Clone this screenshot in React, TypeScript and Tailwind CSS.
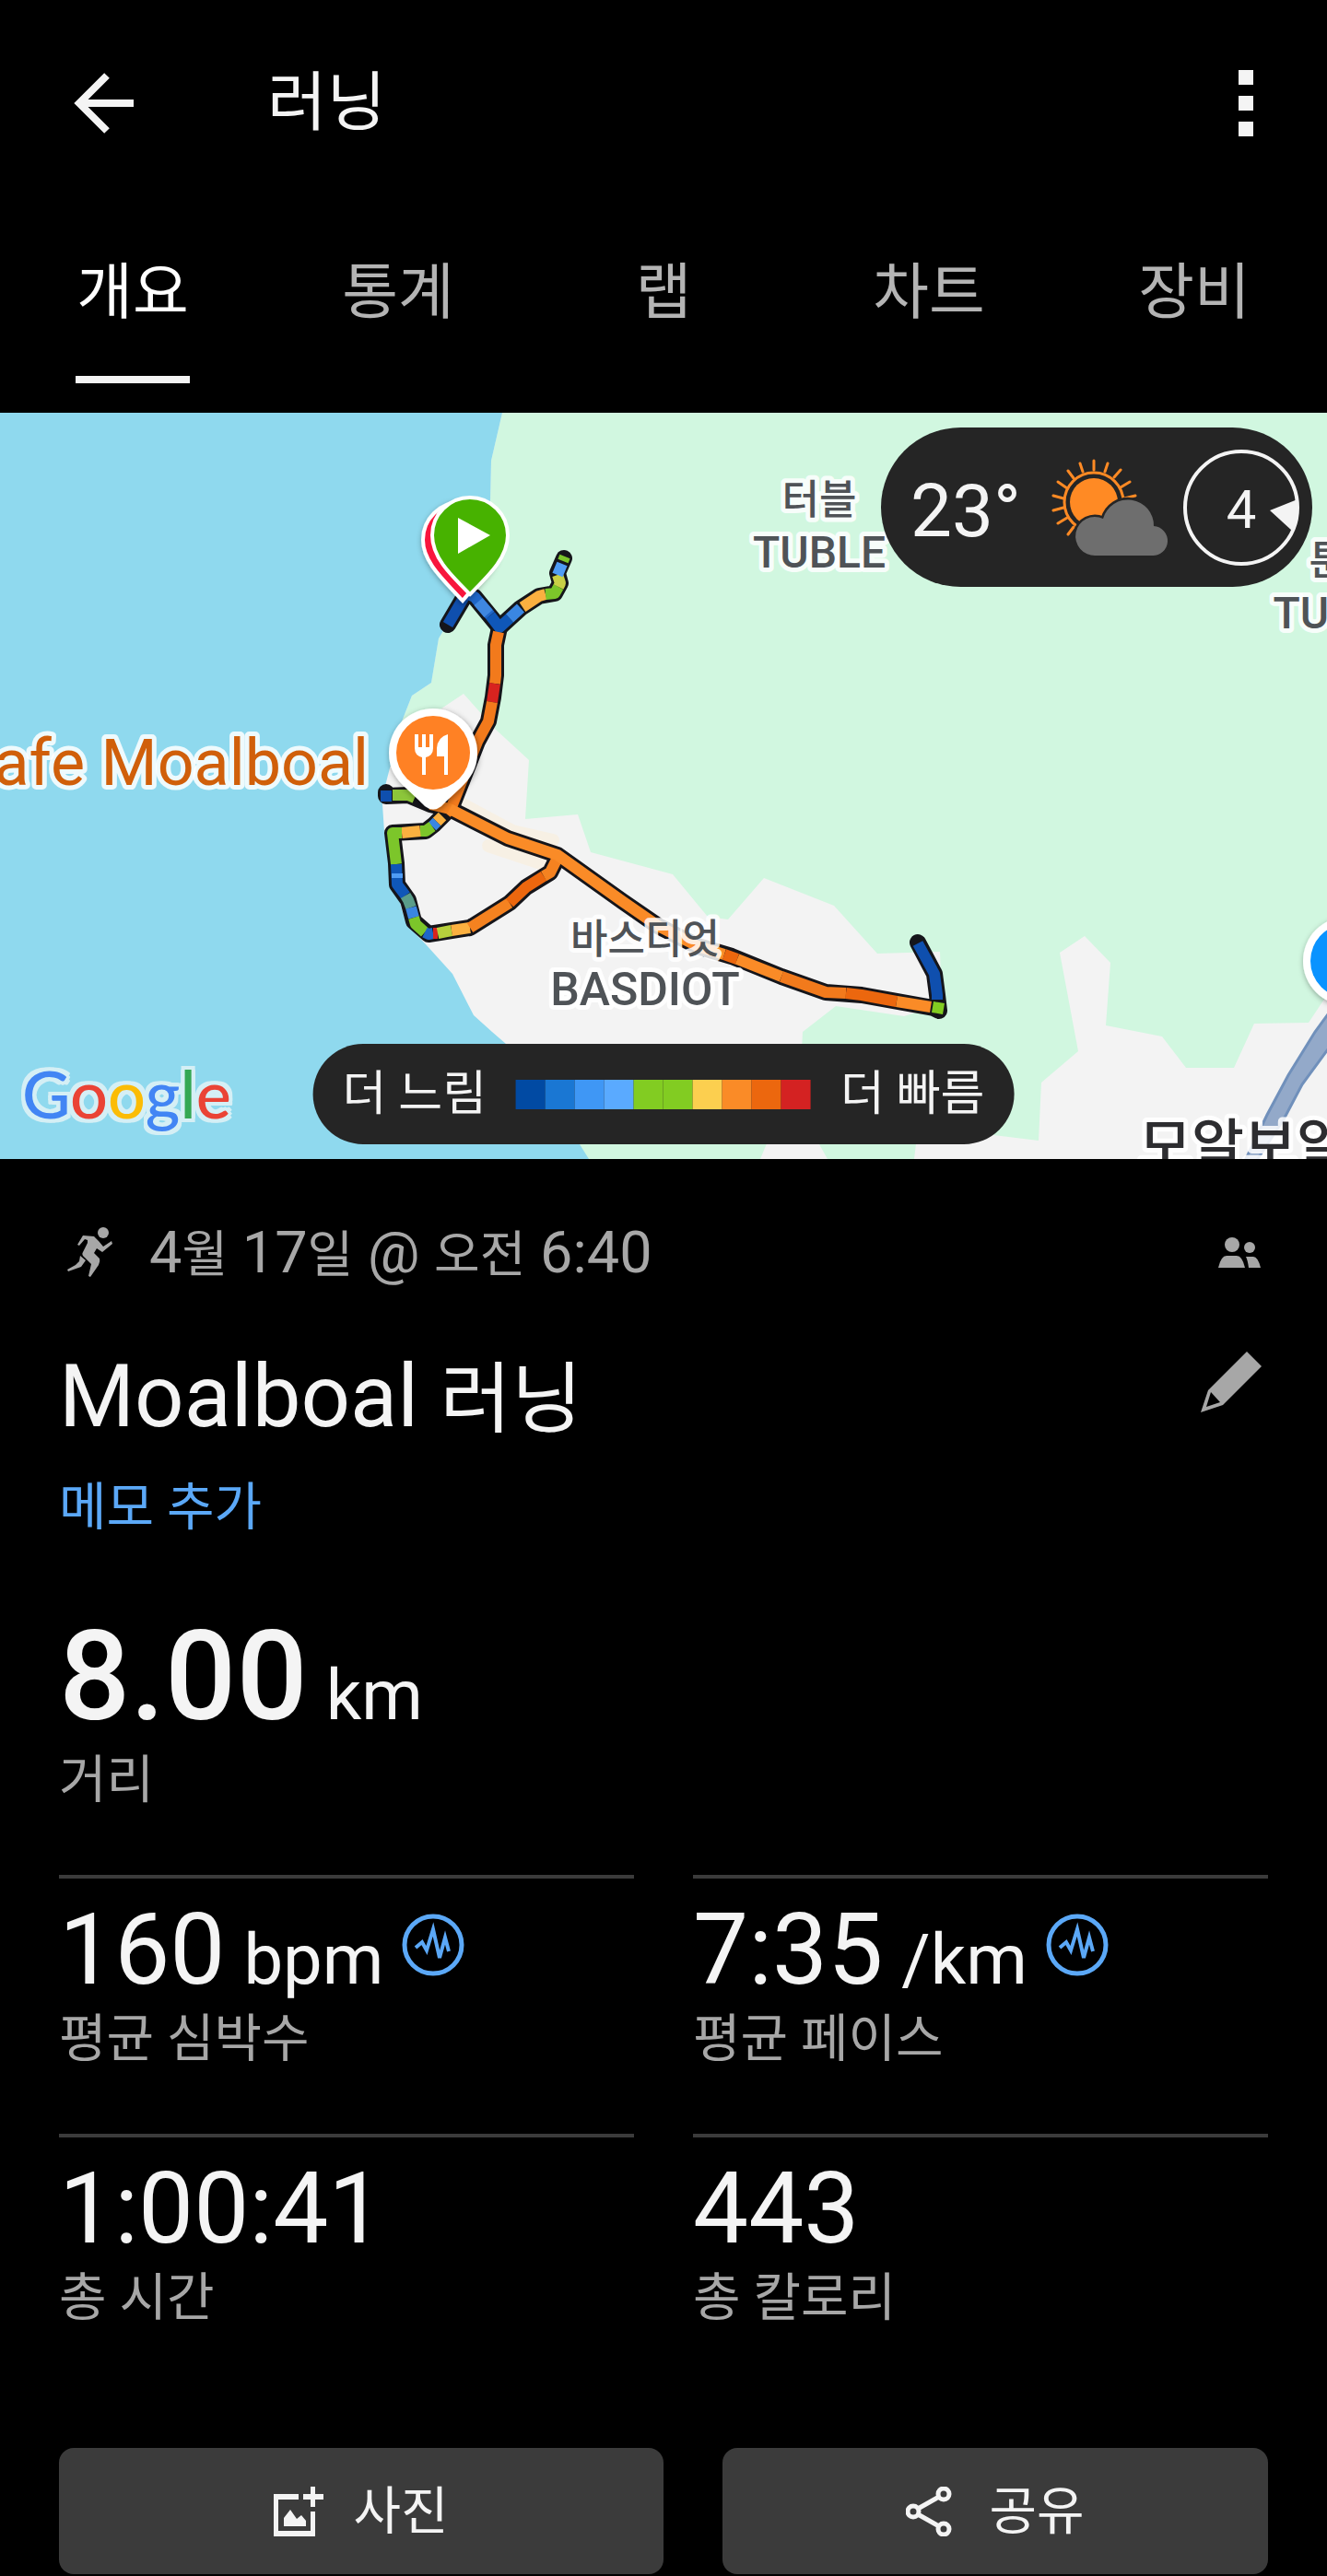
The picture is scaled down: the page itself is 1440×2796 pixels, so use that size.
import React, { useState } from "react";
import classNames from "clsx";

const tabs = ["개요", "통계", "랩", "차트", "장비"];

const paceColors = [
  "bg-[#014aa3]",
  "bg-[#1a77d3]",
  "bg-[#3f97f5]",
  "bg-[#5aaaff]",
  "bg-[#82cc22]",
  "bg-[#82cc22]",
  "bg-[#fccf4f]",
  "bg-[#fa8b27]",
  "bg-[#ec670e]",
  "bg-[#d42222]",
];

const stats = [
  { value: "160", unit: "bpm", label: "평균 심박수", chart: true },
  { value: "7:35", unit: "/km", label: "평균 페이스", chart: true },
  { value: "1:00:41", unit: "", label: "총 시간", chart: false },
  { value: "443", unit: "", label: "총 칼로리", chart: false },
];

const googleLetters = [
  { letter: "G", color: "text-[#4285f4]" },
  { letter: "o", color: "text-[#ea4335]" },
  { letter: "o", color: "text-[#fbbc05]" },
  { letter: "g", color: "text-[#4285f4]" },
  { letter: "l", color: "text-[#34a853]" },
  { letter: "e", color: "text-[#ea4335]" },
];

// Outline of the whole track, drawn dark under the coloured pace segments
const trackOutline = [
  "486,678 506,644 515,648 542,681 565,660 585,647 602,644 608,633 605,622 612,606",
  "542,681 538,700 538,733 535,757 530,783 518,805 490,876",
  "419,860 419,864 443,863 467,873 488,878 551,910 605,928 675,978 714,1005 757,1027 794,1038 848,1060 896,1077 935,1080 1013,1094 1019,1097 1017,1080 1014,1057 996,1023",
  "488,878 471,895 462,902 426,904 430,937 431,960 443,977 449,1000 465,1014 510,1007 553,980 571,963 597,947 605,931",
];

const trackSegments = [
  { color: "#0f4fae", points: "486,678 506,644" },
  { color: "#1f66c8", points: "506,644 515,648 532,668" },
  { color: "#3f87e0", points: "519,653 530,666" },
  { color: "#0f57b8", points: "532,668 542,681 553,671" },
  { color: "#3a86e2", points: "553,671 565,660" },
  { color: "#fbb040", points: "567,659 585,647 592,645" },
  { color: "#7cc62a", points: "592,645 602,644 606,637" },
  { color: "#c9d046", points: "606,637 608,633 605,624" },
  { color: "#4f9cf5", points: "605,624 610,612" },
  { color: "#7cc62a", points: "611,609 613,604" },
  { color: "#f27a1c", points: "541,686 538,700 538,733 537,742" },
  { color: "#d8231f", points: "537,742 534,762" },
  { color: "#f27a1c", points: "534,762 530,783 518,805 490,876" },
  { color: "#0f4fae", points: "419,858 419,870" },
  { color: "#8cc63a", points: "426,863 443,863 450,866" },
  { color: "#f58220", points: "467,873 488,878 484,883" },
  { color: "#fbb040", points: "480,886 474,892" },
  { color: "#3a86e2", points: "474,892 469,897" },
  { color: "#7cc62a", points: "469,897 462,902 456,902" },
  { color: "#fbb040", points: "456,902 436,904" },
  { color: "#7cc62a", points: "436,904 426,904 430,938" },
  { color: "#0f57b8", points: "430,938 431,960 440,972" },
  { color: "#4f9cf5", points: "431,948 431,953" },
  { color: "#5a9d8a", points: "440,972 443,977 446,985" },
  { color: "#3a86e2", points: "446,985 449,996" },
  { color: "#7cc62a", points: "449,996 451,1003 461,1012" },
  { color: "#1f66c8", points: "461,1012 465,1014 470,1013" },
  { color: "#d8231f", points: "470,1013 475,1013" },
  { color: "#b6d03c", points: "475,1013 490,1010" },
  { color: "#fbb040", points: "490,1010 510,1007" },
  { color: "#f58220", points: "510,1007 553,980" },
  { color: "#ec670e", points: "553,980 571,963 590,951" },
  { color: "#f58220", points: "590,951 597,947 605,931" },
  {
    color: "#fa8b27",
    points: "488,878 551,910 605,928 675,978 714,1005 757,1027 786,1036",
  },
  { color: "#ec670e", points: "786,1036 800,1041" },
  { color: "#fa8b27", points: "800,1041 848,1060" },
  { color: "#f27a1c", points: "848,1060 896,1077 918,1078" },
  { color: "#ec670e", points: "918,1078 935,1080 973,1087" },
  { color: "#fa8b27", points: "973,1087 1010,1093" },
  { color: "#0f4fae", points: "1017,1085 1017,1080 1014,1057 996,1024" },
  { color: "#82cc22", points: "1012,1093 1024,1095" },
];

const RouteMap = () => (
  <svg
    viewBox="0 448 1440 810"
    preserveAspectRatio="xMidYMid slice"
    className="block w-full h-[810px]"
    role="img"
    aria-label="Moalboal"
  >
    <defs>
      <filter id="pinShadow" x="-30%" y="-30%" width="160%" height="160%">
        <feDropShadow dx="1" dy="2" stdDeviation="3" floodOpacity="0.4" />
      </filter>
    </defs>
    <rect x="0" y="448" width="1440" height="810" fill="#f3f3f3" />

    {/* Forest */}
    <path
      fill="#d1f7e0"
      d="M545 448 L533 500 L532 545 L500 650 L482 683 L476 693 L468 741 L447 755 L436 783 L440 795 L482 767 L503 753 L536 790 L574 825 L570 889 L627 884 L641 925 L730 949 L768 995 L790 998 L829 953 L905 983 L952 1035 L1020 1033 L1022 1090 L981 1103 L907 1092 L871 1120 L870 1140 L889 1242 L898 1258 L992 1258 L996 1225 L1078 1232 L1127 1238 L1130 1175 L1170 1141 L1150 1034 L1177 1016 L1205 1045 L1200 1113 L1261 1125 L1287 1159 L1339 1159 L1361 1111 L1420 1110 L1440 1080 V448 Z"
    />
    <path fill="#d1f7e0" d="M615 1210 L845 1210 L825 1258 L630 1258 Z" />

    {/* Sea */}
    <path
      fill="#8fd9ee"
      d="M0 448 H545 L533 500 L532 545 L500 650 L482 683 L476 693 L468 741 L447 755 L436 783 L418 853 L415 873 L417 903 L436 987 L441 1003 L462 1025 L491 1057 L514 1102 L534 1120 L549 1133 L629 1242 L639 1258 H0 Z"
    />

    {/* Road */}
    <path
      fill="#93a9c9"
      stroke="#7090bb"
      strokeWidth="3"
      d="M1446 1094 L1427 1120 L1398 1167 L1375 1210 L1350 1262 L1362 1262 L1393 1215 L1413 1177 L1446 1132 Z"
    />
    <g
      fill="none"
      stroke="#f7f0e4"
      strokeWidth="14"
      strokeLinejoin="round"
      strokeLinecap="round"
    >
      <path d="M500 872 L556 902 L600 912" />
      <path d="M530 918 L560 928 L590 938" />
    </g>

    {/* Track */}
    <g
      fill="none"
      stroke="#15151a"
      strokeWidth="18"
      strokeLinejoin="round"
      strokeLinecap="round"
    >
      {trackOutline.map((points) => (
        <polyline key={points} points={points} />
      ))}
    </g>
    <g fill="none" strokeWidth="12" strokeLinejoin="round">
      {trackSegments.map(({ color, points }) => (
        <polyline key={points} points={points} stroke={color} />
      ))}
    </g>

    {/* Place names */}
    <g
      className="font-medium"
      fill="#4f5357"
      stroke="#ffffff"
      strokeOpacity="0.85"
      strokeWidth="10"
      strokeLinejoin="round"
      paintOrder="stroke"
      textAnchor="middle"
    >
      <text x="889" y="558" fontSize="44">터블</text>
      <text x="889" y="616" fontSize="48">TUBLE</text>
      <text x="1461" y="624" fontSize="44">툰가</text>
      <text x="1461" y="682" fontSize="48">TUNGA</text>
      <text x="700" y="1035" fontSize="44">바스디엇</text>
      <text x="700" y="1091" fontSize="50">BASDIOT</text>
      <text x="1236" y="1266" fontSize="62" fill="#2d2d30" textAnchor="start">
        모알보알
      </text>
      <text
        x="400"
        y="852"
        fontSize="70"
        fill="#d05f0a"
        textAnchor="end"
        className="font-normal"
      >
        Cafe Moalboal
      </text>
    </g>

    {/* Beach pin at the right edge */}
    <g filter="url(#pinShadow)">
      <circle cx="1462" cy="1043" r="48" fill="#ffffff" />
    </g>
    <circle cx="1462" cy="1043" r="40" fill="#0a93ff" />

    {/* Restaurant pin */}
    <path
      filter="url(#pinShadow)"
      fill="#ffffff"
      d="M470 769 a48 48 0 0 1 48 48 c0 18 -8 28 -18 38 c-10 9 -16 15 -21 20 q-9 7 -18 0 c-5 -5 -11 -11 -21 -20 c-10 -10 -18 -20 -18 -38 a48 48 0 0 1 48 -48 Z"
    />
    <circle cx="470" cy="817" r="40" fill="#ff8124" />
    <path
      fill="#ffffff"
      d="M450 797 h4 v14 h4 v-14 h4 v14 h4 v-14 h4 v15 q0 8 -8 10 v19 h-4 v-19 q-8 -2 -8 -10 Z M486 797 v44 h-4 v-20 h-8 v-9 q1 -12 12 -15 Z"
    />

    {/* Finish pin under the start pin */}
    <path
      filter="url(#pinShadow)"
      fill="#f8123c"
      stroke="#ffffff"
      strokeWidth="4"
      d="M500 545 a41 41 0 0 1 41 41 c0 24 -20 43 -39 66 c-21 -23 -43 -42 -43 -66 a41 41 0 0 1 41 -41 Z"
    />
    <path
      fill="#47b200"
      stroke="#ffffff"
      strokeWidth="4"
      d="M510 540 a41 41 0 0 1 41 41 c0 24 -20 43 -41 64 c-21 -21 -41 -40 -41 -64 a41 41 0 0 1 41 -41 Z"
    />
    <path fill="#ffffff" d="M497 562 V601 L532 581 Z" />
  </svg>
);

const WeatherIcon = () => (
  <svg
    viewBox="1138 496 132 110"
    className="w-[132px] h-[110px] ml-4"
    aria-hidden="true"
  >
    <g stroke="#ff8a24" strokeWidth="3" strokeLinecap="round">
      <path d="M1187 510 V500 M1199 512 L1202 503 M1209 518 L1216 510 M1216 529 L1226 523 M1220 541 L1232 538 M1175 512 L1172 503 M1165 519 L1159 511 M1158 530 L1148 523 M1154 541 L1143 538 M1154 551 L1143 554 M1158 562 L1148 568 M1165 572 L1159 580" />
    </g>
    <circle cx="1187" cy="545" r="32" fill="none" stroke="#ff8a24" strokeWidth="3" />
    <circle cx="1187" cy="545" r="26" fill="#ff8a24" />
    <path
      fill="#6e6e6e"
      stroke="#252525"
      strokeWidth="5"
      paintOrder="stroke"
      d="M1189 603 a21 21 0 1 1 8 -40 a28 28 0 0 1 55 8 a16 16 0 0 1 -2 32 Z"
    />
  </svg>
);

const WindCompass = () => (
  <div className="relative flex items-center justify-center w-[126px] h-[126px] border-4 border-[#f4f4f4] rounded-full">
    <span className="pt-1 text-[58px] leading-[64px]">4</span>
    <svg
      viewBox="0 0 32 34"
      className="absolute -right-1 top-[50px] w-8 h-[34px]"
      aria-hidden="true"
    >
      <path fill="#f4f4f4" d="M0 12 L30 0 Q33 18 24 34 Z" />
    </svg>
  </div>
);

const ChartBadge = () => (
  <svg viewBox="0 0 68 68" className="w-[68px] h-[68px]" aria-hidden="true">
    <g fill="none" stroke="#5ba8f7" strokeLinejoin="miter">
      <circle cx="34" cy="34" r="31" strokeWidth="5" />
      <path strokeWidth="4" d="M15 37 L22 31 L27 40 L34 17 L41 48 L47 26 L51 41" />
    </g>
  </svg>
);

const App = () => {
  const [activeTab, setActiveTab] = useState(0);

  return (
    <main className="w-full bg-black text-[#f4f4f4] font-[Roboto,'Noto_Sans_CJK_KR',sans-serif]">
      <header className="flex items-center h-56 pl-20 pr-16">
        <button type="button" aria-label="뒤로">
          <svg viewBox="0 0 66 66" className="w-[66px] h-[66px]" aria-hidden="true">
            <path
              d="M65 33 H6 M36 3 L6 33 L36 63"
              fill="none"
              stroke="#f4f4f4"
              strokeWidth="8"
            />
          </svg>
        </button>
        <h1 className="flex-1 ml-36 text-[70px] leading-[80px]">러닝</h1>
        <button
          type="button"
          aria-label="더보기"
          className="flex flex-col items-center gap-3 w-12"
        >
          <span className="w-4 h-4 bg-[#f4f4f4]" />
          <span className="w-4 h-4 bg-[#f4f4f4]" />
          <span className="w-4 h-4 bg-[#f4f4f4]" />
        </button>
      </header>

      <nav className="flex pb-8" role="tablist">
        {tabs.map((tab, index) => (
          <button
            key={tab}
            type="button"
            role="tab"
            aria-selected={activeTab === index}
            onClick={() => setActiveTab(index)}
            className="flex flex-1 justify-center text-[66px]"
          >
            <span
              className={classNames(
                "h-48 px-px border-b-8 leading-[188px]",
                activeTab === index
                  ? "border-[#f4f4f4] text-white"
                  : "border-transparent text-[#b4b4b4]"
              )}
            >
              {tab}
            </span>
          </button>
        ))}
      </nav>

      <section className="relative overflow-hidden">
        <RouteMap />

        <div className="absolute top-4 right-4 flex items-center justify-between w-[468px] h-[173px] pl-8 pr-[14px] rounded-full bg-[#252525]">
          <span className="pt-2 text-[80px] leading-[96px]">23°</span>
          <WeatherIcon />
          <WindCompass />
        </div>

        <div className="absolute bottom-4 left-1/2 -translate-x-1/2 flex items-center gap-8 h-[109px] px-8 rounded-full bg-[#252525] text-[52px] leading-[64px] whitespace-nowrap">
          <span>더 느림</span>
          <div className="flex">
            {paceColors.map((color, index) => (
              <span key={index} className={classNames("w-8 h-8", color)} />
            ))}
          </div>
          <span>더 빠름</span>
        </div>

        <p className="absolute bottom-7 left-6 text-[72px] leading-[88px] font-medium font-[Lato,sans-serif] [filter:drop-shadow(4px_0_0_#d5eff5)_drop-shadow(-4px_0_0_#d5eff5)_drop-shadow(0_4px_0_#d5eff5)_drop-shadow(0_-4px_0_#d5eff5)]">
          {googleLetters.map(({ letter, color }, index) => (
            <span key={index} className={color}>
              {letter}
            </span>
          ))}
        </p>
      </section>

      <section className="px-16 pt-[62px] pb-0.5">
        <div className="flex items-center h-20 text-[#a7a7a7]">
          <svg viewBox="0 0 54 56" className="w-[54px] h-14 ml-2" aria-hidden="true">
            <g fill="#a7a7a7">
              <ellipse cx="40" cy="6" rx="6" ry="6" />
              <path d="M12 19 L18 9 L30 10 L35 15 L40 21 L49 15 L50 18 L39 27 L33 23 L30 28 L36 34 Q37 37 35 41 L26 54 L24 53 L27 40 L20 33 Q16 30 18 27 L23 17 L23 14 L20 13 L14 20 Z" />
              <path d="M15 31 L21 36 L16 43 L2 48 L1 46 L10 41 L14 37 Z" />
            </g>
          </svg>
          <p className="flex-1 ml-9 text-[63px] leading-[80px]">
            4<span className="text-[54px] leading-none">월</span> 17
            <span className="text-[54px] leading-none">일</span> @{" "}
            <span className="text-[54px] leading-none">오전</span> 6:40
          </p>
          <svg viewBox="0 0 46 34" className="w-[46px] h-[34px] mr-2" aria-hidden="true">
            <g fill="#a7a7a7">
              <circle cx="15" cy="8" r="8" />
              <circle cx="34" cy="11" r="6" />
              <path d="M0 33 Q3 20 9 20 H20 Q26 20 29 33 Z" />
              <path d="M30 21 H38 Q43 21 46 33 H33 Q32 25 30 21 Z" />
            </g>
          </svg>
        </div>

        <div className="flex items-center mt-[60px]">
          <h2 className="flex-1 text-[94px] leading-[112px]">
            Moalboal <span className="text-[84px] leading-none">러닝</span>
          </h2>
          <button type="button" aria-label="이름 편집" className="mr-[6px] mb-8">
            <svg viewBox="0 0 68 68" className="w-[68px] h-[68px]" aria-hidden="true">
              <path
                fill="#a7a7a7"
                fillRule="evenodd"
                d="M51 1 L67 17 L25 59 L1 67 L9 43 Z M12 45 L7 61 L22 56 Z"
              />
            </svg>
          </button>
        </div>
        <button
          type="button"
          className="block mt-6 text-[56px] leading-[80px] text-[#5ba8f7]"
        >
          메모 추가
        </button>

        <div className="mt-[68px]">
          <p className="flex items-baseline gap-5 h-[152px] text-[136px] leading-[152px] font-medium">
            8.00
            <span className="text-[76px] leading-none font-normal">km</span>
          </p>
          <p className="text-[56px] leading-[72px] text-[#a7a7a7]">거리</p>
        </div>

        <div className="grid grid-cols-2 gap-x-16 mt-[67px]">
          {stats.map(({ value, unit, label, chart }) => (
            <div key={label} className="pt-[18px] pb-[67px] border-t-4 border-[#3b3b3b]">
              <div className="flex gap-5 h-[120px]">
                <p className="flex items-baseline gap-5 text-[107px] leading-[120px]">
                  {value}
                  {unit && <span className="text-[76px] leading-none">{unit}</span>}
                </p>
                {chart && (
                  <div className="pt-5">
                    <ChartBadge />
                  </div>
                )}
              </div>
              <p className="text-[56px] leading-[72px] text-[#a7a7a7]">{label}</p>
            </div>
          ))}
        </div>

        <div className="grid grid-cols-[41fr_37fr] gap-x-16 mt-[60px] text-[56px] leading-[64px]">
          <button
            type="button"
            className="flex items-center justify-center gap-8 h-[137px] rounded-2xl bg-[#3b3b3b]"
          >
            <svg viewBox="0 0 54 54" className="w-[54px] h-[54px]" aria-hidden="true">
              <path
                fill="#f4f4f4"
                d="M0 8 H27 V14 H5 V48 H40 V27 H45 V54 H0 Z M40 0 H45 V8 H54 V14 H45 V22 H40 V14 H32 V8 H40 Z M11 43 V34 L18 25 L25 35 L30 31 L35 37 V43 Z"
              />
            </svg>
            사진
          </button>
          <button
            type="button"
            className="flex items-center justify-center gap-10 h-[137px] rounded-2xl bg-[#3b3b3b]"
          >
            <svg viewBox="0 0 50 54" className="w-[50px] h-[54px]" aria-hidden="true">
              <g fill="none" stroke="#f4f4f4" strokeWidth="5">
                <circle cx="41" cy="8" r="6" />
                <circle cx="8" cy="27" r="6" />
                <circle cx="41" cy="46" r="6" />
                <path d="M13 24 L36 11 M13 30 L36 43" />
              </g>
            </svg>
            공유
          </button>
        </div>
      </section>
    </main>
  );
};

export default App;
